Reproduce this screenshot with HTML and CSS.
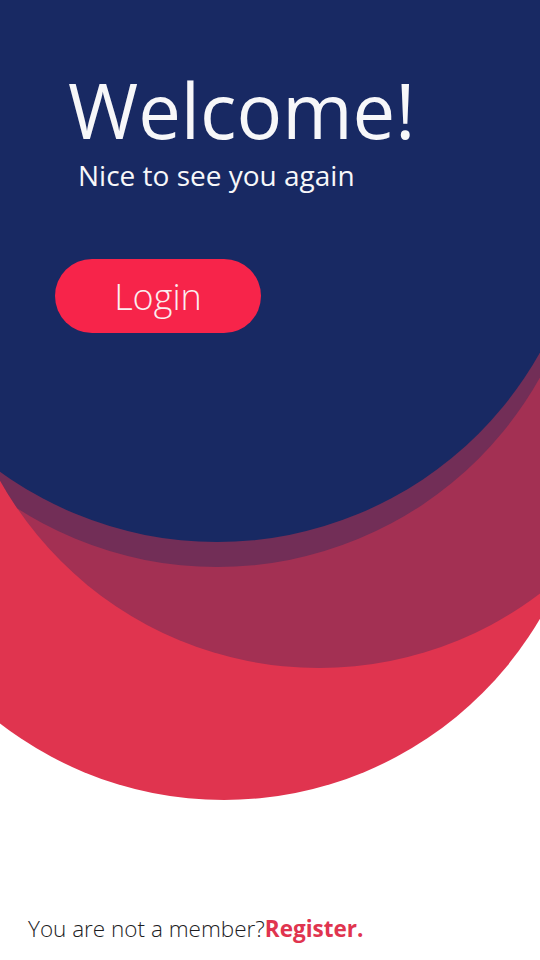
FILE: index.html
```html
<!DOCTYPE html>
<html lang="en">
<head>
<meta charset="utf-8">
<title>Welcome</title>
<link rel="stylesheet" href="styles.css">
</head>
<body>
<div class="screen">
  <svg class="bg" width="540" height="960" viewBox="0 0 540 960" aria-hidden="true">
    <defs>
      <clipPath id="clipB"><circle cx="319" cy="303" r="365"/></clipPath>
    </defs>
    <circle cx="224" cy="434" r="366" fill="#e0344f"/>
    <circle cx="319" cy="303" r="365" fill="#a33053"/>
    <circle cx="217" cy="197" r="370" fill="#722e57" clip-path="url(#clipB)"/>
    <circle cx="217" cy="172" r="370" fill="#182963"/>
  </svg>
  <header class="hero">
    <h1 class="title">Welcome!</h1>
    <p class="subtitle">Nice to see you again</p>
    <button class="login-btn" type="button">Login</button>
  </header>
  <footer class="footer">
    <span class="footer-text">You are not a member?</span><a class="register" href="#">Register.</a>
  </footer>
</div>
</body>
</html>
```
FILE: styles.css
```css
html, body {
  margin: 0;
  padding: 0;
}
body {
  background: #ffffff;
}
.screen {
  width: 540px;
  height: 960px;
  position: relative;
  overflow: hidden;
  background: #ffffff;
  font-family: "Open Sans", "Noto Sans", sans-serif;
  display: flex;
  flex-direction: column;
}
.bg {
  position: absolute;
  left: 0;
  top: 0;
  z-index: 0;
}
.hero {
  position: relative;
  z-index: 1;
  padding: 72px 0 0 68px;
  display: flex;
  flex-direction: column;
  align-items: flex-start;
}
.title {
  margin: 0;
  font-size: 76px;
  font-weight: 400;
  line-height: 1;
  color: #f7f7f9;
}
.subtitle {
  margin: 13px 0 0 10px;
  font-size: 28px;
  line-height: 1;
  color: #f7f7f9;
}
.login-btn {
  margin: 70px 0 0 -13px;
  width: 206px;
  height: 74px;
  border: 0;
  border-radius: 37px;
  background: #f7244a;
  color: #fbeef0;
  font-family: "Open Sans", "Noto Sans", sans-serif;
  font-size: 36px;
  font-weight: 300;
  padding: 0;
}
.footer {
  position: relative;
  z-index: 1;
  margin-top: auto;
  padding: 0 0 16px 28px;
  font-size: 22.5px;
  line-height: 30px;
  color: #1d1d1f;
}
.footer-text {
  font-weight: 300;
}
.register {
  color: #e0344f;
  font-weight: 700;
  text-decoration: none;
}
```
